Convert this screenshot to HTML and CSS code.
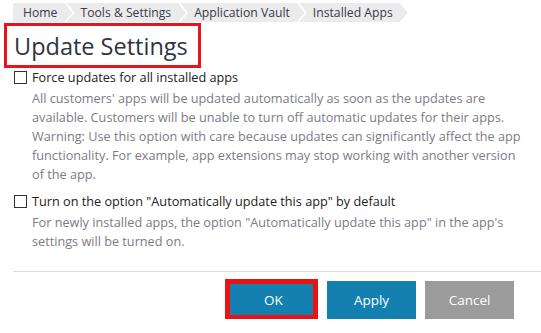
FILE: index.html
```html
<!DOCTYPE html>
<html lang="en">
<head>
    <meta charset="UTF-8">
    <meta name="viewport" content="width=device-width, initial-scale=1.0">
    <title>Update Settings</title>
    <link rel="stylesheet" href="styles.css">
</head>
<body>
    <div class="breadcrumbs">
        <span class="crumb">Home</span>
        <span class="crumb">Tools &amp; Settings</span>
        <span class="crumb">Application Vault</span>
        <span class="crumb">Installed Apps</span>
    </div>

    <h1 class="page-title">Update Settings</h1>

    <div class="option">
        <label class="option-label">
            <input type="checkbox" class="check">
            Force updates for all installed apps
        </label>
        <p class="hint">
            All customers' apps will be updated automatically as soon as the updates are
            available. Customers will be unable to turn off automatic updates for their apps.
            Warning: Use this option with care because updates can significantly affect the app
            functionality. For example, app extensions may stop working with another version
            of the app.
        </p>
    </div>

    <div class="option option-second">
        <label class="option-label">
            <input type="checkbox" class="check">
            Turn on the option "Automatically update this app" by default
        </label>
        <p class="hint">
            For newly installed apps, the option "Automatically update this app" in the app's
            settings will be turned on.
        </p>
    </div>

    <div class="form-footer">
        <button class="btn btn-primary btn-marked">OK</button>
        <button class="btn btn-primary">Apply</button>
        <button class="btn btn-cancel">Cancel</button>
    </div>
</body>
</html>
```

FILE: styles.css
```css
body {
    margin: 0;
    font-family: 'Open Sans', 'DejaVu Sans', sans-serif;
    font-size: 12.7px;
    color: #222;
    background: #fff;
    width: 541px;
}

.breadcrumbs {
    display: flex;
    margin: 3px 0 0 13px;
    height: 19px;
    font-size: 12.2px;
}

.crumb {
    background: #ebebeb;
    color: #3a3a48;
    line-height: 19px;
    padding: 0 15px 0 14px;
    margin-left: -6px;
    white-space: nowrap;
    clip-path: polygon(0 0, calc(100% - 8px) 0, 100% 50%, calc(100% - 8px) 100%, 0 100%, 8px 50%);
}

.crumb:first-child {
    margin-left: 0;
    padding-left: 10px;
    clip-path: polygon(0 0, calc(100% - 8px) 0, 100% 50%, calc(100% - 8px) 100%, 0 100%);
}

.page-title {
    display: inline-block;
    margin: 1px 0 0 4px;
    padding: 0 10px 0 7px;
    border: 3px solid #e8141c;
    height: 39px;
    font-size: 23.5px;
    font-weight: normal;
    line-height: 40px;
    color: #2f3440;
}

.option {
    margin-left: 14px;
    margin-right: 14px;
}

.option-second {
    margin-top: 8px;
}

.option-label {
    display: flex;
    align-items: center;
    gap: 5px;
    line-height: 19px;
    color: #222;
}

.check {
    appearance: none;
    margin: 0;
    width: 13px;
    height: 13px;
    border: 1px solid #333;
    background: #fff;
    flex-shrink: 0;
}

.hint {
    margin: 2px 0 0 18px;
    line-height: 19px;
    color: #7d7b85;
}

.form-footer {
    display: flex;
    justify-content: flex-end;
    gap: 9px;
    margin: 20px 0 0 13px;
    padding: 9px 27px 0 0;
    border-top: 1px solid #dcdcdc;
}

.btn {
    width: 89px;
    height: 38px;
    border: none;
    font-family: 'Open Sans', 'DejaVu Sans', sans-serif;
    font-size: 13.5px;
    color: #fff;
    cursor: pointer;
}

.btn-primary {
    background: #1380b0;
}

.btn-cancel {
    background: #9b9b9b;
}

.btn-marked {
    position: relative;
}

.btn-marked::after {
    content: "";
    position: absolute;
    left: -4px;
    top: -2px;
    width: 83px;
    height: 31px;
    border: 5px solid #ee1111;
}
```
